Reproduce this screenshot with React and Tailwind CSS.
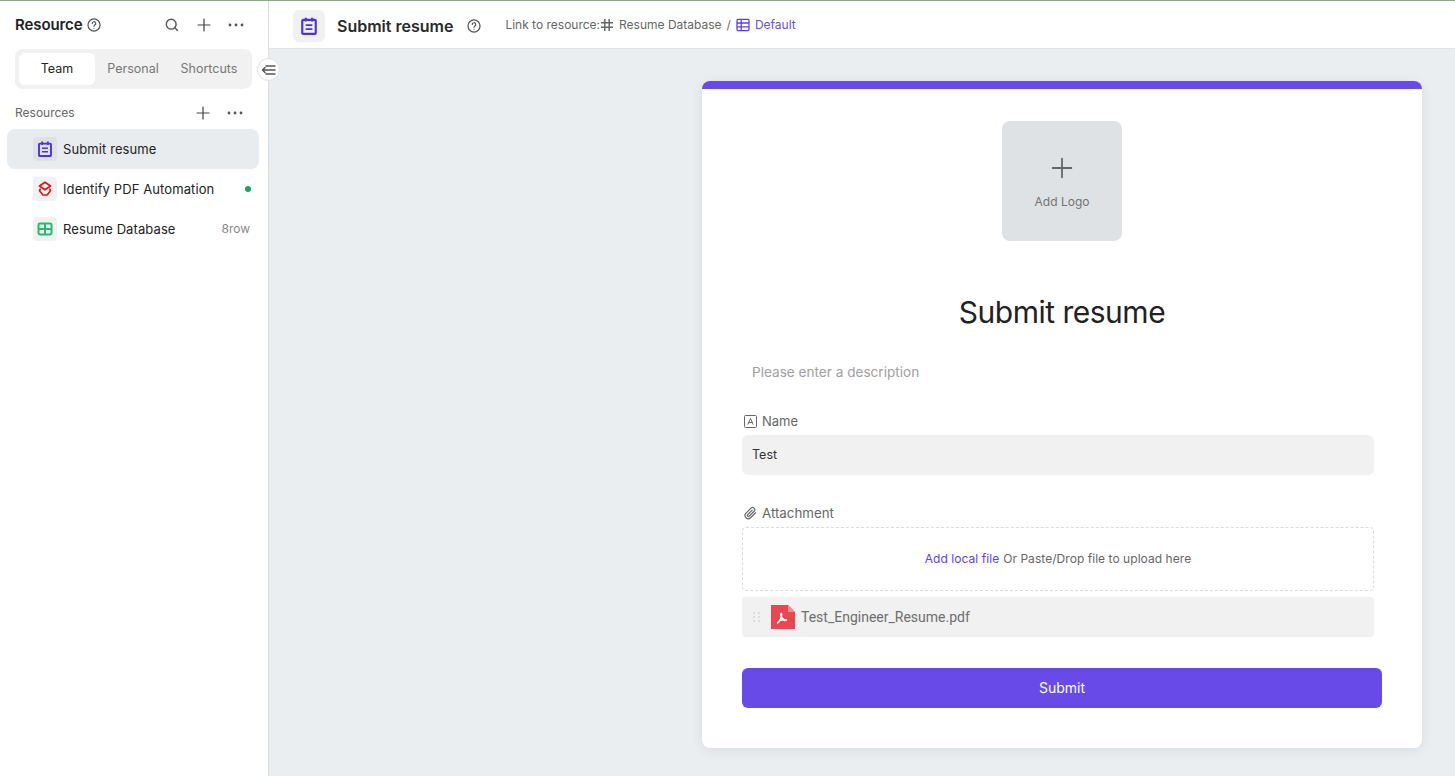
import React from "react";

const Help = ({ s = 14, c = "#555" }) => (
  <svg width={s} height={s} viewBox="0 0 16 16" fill="none" stroke={c} strokeWidth="1.4" strokeLinecap="round" strokeLinejoin="round">
    <circle cx="8" cy="8" r="6.9" />
    <path d="M6 6.300a2 2 0 1 1 3 1.700c-.6.350-1 .7-1 1.500" />
    <circle cx="8" cy="11.700" r=".7" fill={c} stroke="none" />
  </svg>
);
const Plus = ({ s = 16, c = "#444", w = 1.4 }) => (
  <svg width={s} height={s} viewBox="0 0 16 16" fill="none" stroke={c} strokeWidth={w} strokeLinecap="round">
    <path d="M8 1.200v13.600M1.200 8h13.600" />
  </svg>
);
const Dots = ({ c = "#555" }) => (
  <svg width="16" height="4" viewBox="0 0 16 4" fill={c}>
    <circle cx="2" cy="2" r="1.400" />
    <circle cx="8" cy="2" r="1.400" />
    <circle cx="14" cy="2" r="1.400" />
  </svg>
);
const Form = ({ s = 16, c = "#4f30ea", w = 1.9 }) => (
  <svg width={s} height={s} viewBox="0 0 16 16" fill="none" stroke={c} strokeWidth={w} strokeLinejoin="round">
    <rect x="2" y="2.600" width="12" height="12.400" rx=".8" />
    <path d="M5.200 .6v3.400M10.800 .6v3.400" />
    <path d="M5 7.300h6M5 10.800h6" strokeWidth={w * 0.8} />
  </svg>
);
const Layers = () => (
  <svg width="16" height="16" viewBox="0 0 16 16" fill="none" stroke="#d9161f" strokeWidth="1.700" strokeLinejoin="round" strokeLinecap="round">
    <path d="M8 1.300 13.500 5 8 8.700 2.500 5Z" />
    <path d="M3.200 8.200 2.500 9.800 6 14h4l3.500-4.200-.7-1.600" />
  </svg>
);
const Grid = () => (
  <svg width="16" height="16" viewBox="0 0 16 16" fill="none" stroke="#20bd72" strokeWidth="2">
    <rect x="1.500" y="2.500" width="13" height="11" rx="1.400" />
    <path d="M1.500 8h13M8 2.500v11" />
  </svg>
);

const rows = [
  { name: "Submit resume", icon: <Form />, active: true },
  { name: "Identify PDF Automation", icon: <Layers />, right: <span className="w-[6px] h-[6px] rounded-full bg-[#10a96a]" /> },
  { name: "Resume Database", icon: <Grid />, right: <span className="text-[12px] text-[#888] mr-[1px]">8row</span> },
];

export default function App() {
  return (
    <div
      className="w-[1455px] h-[776px] flex flex-col overflow-hidden bg-white relative text-[#222]"
      style={{ fontFamily: "Inter, sans-serif" }}
    >
      <div className="h-px bg-[#8fa98f] shrink-0" />
      <div className="flex flex-1 min-h-0">
        <aside className="w-[269px] shrink-0 border-r border-[#dcdcdc] bg-white flex flex-col">
          <div className="h-[48px] flex items-center pl-[15px] pr-[24px]">
            <span className="text-[15px] font-semibold text-[#222] tracking-[-0.1px]">Resource</span>
            <span className="ml-[5px] flex"><Help /></span>
            <div className="ml-auto flex items-center">
              <svg width="14" height="14" viewBox="0 0 14 14" fill="none" stroke="#555" strokeWidth="1.400" strokeLinecap="round">
                <circle cx="6.200" cy="6.200" r="4.900" />
                <path d="m9.800 9.800 2.700 2.700" />
              </svg>
              <span className="ml-[18px] flex"><Plus s={14} /></span>
              <span className="ml-[17px] flex"><Dots /></span>
            </div>
          </div>
          <div className="ml-[15px] w-[237px] h-[40px] rounded-[8px] bg-[#f1f1f1] flex items-center p-[4px]">
            <div className="w-[76px] h-[32px] rounded-[6px] bg-white flex items-center justify-center text-[12.5px] text-[#222]">Team</div>
            <div className="w-[76px] h-[32px] flex items-center justify-center text-[12.5px] text-[#777]">Personal</div>
            <div className="w-[76px] h-[32px] flex items-center justify-center text-[12.5px] text-[#777]">Shortcuts</div>
          </div>
          <div className="h-[32px] mt-[8px] flex items-center pl-[15px] pr-[25px]">
            <span className="text-[12px] text-[#666]">Resources</span>
            <span className="ml-auto flex"><Plus s={14} /></span>
            <span className="ml-[17px] flex"><Dots /></span>
          </div>
          <div className="pl-[7px] pr-[9px] flex flex-col">
            {rows.map((r) => (
              <div key={r.name} className={`h-[40px] rounded-[8px] flex items-center pl-[26px] pr-[8px] ${r.active ? "bg-[#e9ecef]" : ""}`}>
                <span className={`w-[24px] h-[24px] rounded-[4px] flex items-center justify-center ${r.active ? "bg-[#dfe1e6]" : "bg-[#f1f1f1]"}`}>{r.icon}</span>
                <span className="ml-[6px] text-[13px] text-[#222] tracking-[0.1px] mt-[1px]">{r.name}</span>
                <span className="ml-auto flex items-center">{r.right}</span>
              </div>
            ))}
          </div>
        </aside>
        <div className="flex-1 min-w-0 flex flex-col bg-[#ebeef1]">
          <header className="h-[48px] shrink-0 bg-white border-b border-[#e4e4e4] flex items-center pl-[24px]">
            <span className="mt-[2px] w-[32px] h-[32px] rounded-[6px] bg-[#f1f1f1] flex items-center justify-center"><Form s={18} /></span>
            <span className="ml-[12px] mt-[2px] text-[16px] font-semibold text-[#2a2a2a]">Submit resume</span>
            <span className="ml-[14px] mt-[2px] flex"><Help /></span>
            <span className="ml-[24px] text-[12px] text-[#666]">Link to resource:</span>
            <svg width="14" height="14" viewBox="0 0 14 14" fill="none" stroke="#666" strokeWidth="1.500">
              <path d="M4.800 1v12M9.200 1v12M1 4.800h12M1 9.200h12" />
            </svg>
            <span className="ml-[5px] text-[12px] text-[#666]">Resume Database</span>
            <span className="ml-[5px] text-[12px] text-[#666]">/</span>
            <svg className="ml-[5px]" width="14" height="14" viewBox="0 0 14 14" fill="none" stroke="#5a3ff0" strokeWidth="1.300">
              <rect x="1" y="1.400" width="12" height="11.200" rx="1" />
              <path d="M1 5h12M1 8.800h12M5.200 1.400v11.200" />
            </svg>
            <span className="ml-[5px] text-[12px] text-[#6a4ee8]">Default</span>
          </header>
          <main className="flex-1 min-h-0 pl-[433px] pt-[32px]">
            <div className="w-[720px] h-[667px] bg-white rounded-[8px] overflow-hidden shadow-[0_2px_12px_rgba(0,0,0,0.08)] flex flex-col">
              <div className="h-[8px] shrink-0 bg-[#674ae8]" />
              <div className="px-[40px] flex flex-col">
                <div className="mt-[32px] self-center w-[120px] h-[120px] rounded-[8px] bg-[#dfe2e5] flex flex-col items-center">
                  <span className="mt-[36px] flex"><Plus s={22} c="#666" w={1.300} /></span>
                  <span className="mt-[14px] text-[12px] text-[#737373]">Add Logo</span>
                </div>
                <h1 className="mt-[52px] h-[38px] leading-[38px] text-center text-[30px] font-normal text-[#222] tracking-[-0.5px]">Submit resume</h1>
                <div className="mt-[31px] pl-[10px] h-[20px] leading-[20px] text-[13.6px] text-[#a0a0a0]">Please enter a description</div>
                <div className="mt-[29px] h-[20px] flex items-center text-[#666]">
                  <svg className="ml-[2px]" width="13" height="13" viewBox="0 0 13 13" fill="none" stroke="#666" strokeWidth="1">
                    <rect x=".5" y=".5" width="12" height="12" rx="1" />
                    <path d="m3.800 9.600 2.700-6.200 2.700 6.200M4.700 7.600h3.600" />
                  </svg>
                  <span className="ml-[5px] mt-[2px] text-[13px] text-[#666]">Name</span>
                </div>
                <div className="mt-[4px] w-[632px] h-[40px] rounded-[6px] bg-[#f1f1f1] flex items-center pl-[10px] text-[12.500px] text-[#333]">Test</div>
                <div className="mt-[28px] h-[20px] flex items-center">
                  <svg className="ml-[2px]" width="13" height="14" viewBox="0 0 24 24" fill="none" stroke="#666" strokeWidth="2.200" strokeLinecap="round" strokeLinejoin="round">
                    <path d="M21.400 11.600 12.200 20.800a6 6 0 0 1-8.500-8.500l9.200-9.200a4 4 0 0 1 5.700 5.700l-9.200 9.200a2 2 0 0 1-2.800-2.800l8.500-8.500" />
                  </svg>
                  <span className="ml-[5px] mt-[2px] text-[13.300px] text-[#666]">Attachment</span>
                </div>
                <div className="mt-[4px] w-[632px] h-[64px] rounded-[4px] border border-dashed border-[#dcdcdc] flex items-center justify-center text-[12px] tracking-[0.05px]">
                  <span className="text-[#5a3ff0]">Add local file</span>
                  <span className="ml-[4px] text-[#666]">Or Paste/Drop file to upload here</span>
                </div>
                <div className="mt-[6px] w-[632px] h-[40px] rounded-[4px] bg-[#f1f1f1] flex items-center pl-[11px]">
                  <svg width="8" height="10" viewBox="0 0 8 10" fill="#dcdcdc">
                    {[0, 4, 8].map((y) => (
                      <g key={y}>
                        <rect x="0" y={y} width="2" height="2" />
                        <rect x="5" y={y} width="2" height="2" />
                      </g>
                    ))}
                  </svg>
                  <svg className="ml-[10px]" width="24" height="24" viewBox="0 0 24 24">
                    <path d="M0 0h17l7 7v17H0Z" fill="#ea4650" />
                    <path d="M17 0l7 7h-7Z" fill="#f58b91" />
                    <path d="M6 18.500c1.800-1 3.500-4 4.500-7.500.3-1.200.2-2.500-.3-2.500s-.6 1.300-.2 2.500c.8 2.300 2.500 4 4.500 4.700M8.500 15.500c2-.6 5-1 7.500-.4" fill="none" stroke="#fff" strokeWidth="1.500" />
                  </svg>
                  <span className="ml-[6px] text-[14px] text-[#6e6e6e]" style={{ fontFamily: "Roboto, sans-serif" }}>Test_Engineer_Resume.pdf</span>
                </div>
                <button className="mt-[31px] w-[640px] h-[40px] pb-[2px] rounded-[6px] bg-[#674ae8] text-white text-[14px]">Submit</button>
              </div>
            </div>
          </main>
        </div>
      </div>
      <button className="absolute left-[257px] top-[58px] w-[23px] h-[23px] rounded-full bg-white border border-[#e0e0e0] flex items-center justify-center">
        <svg width="15" height="12" viewBox="0 0 15 12" fill="none" stroke="#555" strokeWidth="1.500" strokeLinecap="round" strokeLinejoin="round">
          <path d="M5 2h9M1.500 6h12.500M5 10h9M4 3.500 1.500 6 4 8.500" />
        </svg>
      </button>
    </div>
  );
}
